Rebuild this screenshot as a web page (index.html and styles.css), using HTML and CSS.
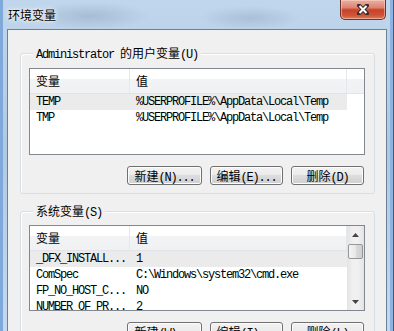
FILE: index.html
```html
<!DOCTYPE html>
<html lang="zh">
<head>
  <meta charset="UTF-8">
  <title>环境变量</title>
  <link rel="stylesheet" href="styles.css">
</head>
<body>
  <div class="window">
    <div class="titlebar">
      <span class="title">环境变量</span>
      <div class="close">
        <svg width="12" height="11" viewBox="0 0 12 11">
          <path d="M2 1.5 L10 9.5 M10 1.5 L2 9.5" stroke="#3b2a2a" stroke-width="4" stroke-linecap="square"/>
          <path d="M2.5 2 L9.5 9 M9.5 2 L2.5 9" stroke="#fff" stroke-width="2"/>
        </svg>
      </div>
    </div>

    <div class="client">
      <!-- user variables -->
      <fieldset class="group">
        <legend>Administrator <span class="zh">的用户变量</span>(U)</legend>
        <div class="list">
          <div class="grid">
            <div class="head">
              <div class="c1 zh">变量</div>
              <div class="c2 zh">值</div>
              <div class="rest"></div>
            </div>
            <div class="row sel">
              <div class="c1">TEMP</div>
              <div class="c2">%USERPROFILE%\AppData\Local\Temp</div>
            </div>
            <div class="row">
              <div class="c1">TMP</div>
              <div class="c2">%USERPROFILE%\AppData\Local\Temp</div>
            </div>
          </div>
        </div>
        <div class="buttons">
          <button class="btn wide"><span class="zh">新建</span>(N)...</button>
          <button class="btn"><span class="zh">编辑</span>(E)...</button>
          <button class="btn"><span class="zh">删除</span>(D)</button>
        </div>
      </fieldset>

      <!-- system variables -->
      <fieldset class="group">
        <legend><span class="zh">系统变量</span>(S)</legend>
        <div class="list">
          <div class="grid">
            <div class="head">
              <div class="c1 zh">变量</div>
              <div class="c2 zh">值</div>
            </div>
            <div class="row sel">
              <div class="c1">_DFX_INSTALL...</div>
              <div class="c2">1</div>
            </div>
            <div class="row">
              <div class="c1">ComSpec</div>
              <div class="c2">C:\Windows\system32\cmd.exe</div>
            </div>
            <div class="row">
              <div class="c1">FP_NO_HOST_C...</div>
              <div class="c2">NO</div>
            </div>
            <div class="row">
              <div class="c1">NUMBER_OF_PR...</div>
              <div class="c2">2</div>
            </div>
          </div>
          <div class="scroll">
            <div class="arrow">
              <svg width="7" height="4" viewBox="0 0 7 4"><path d="M0 4 L3.5 0 L7 4 Z" fill="#444"/></svg>
            </div>
            <div class="thumb"></div>
            <div class="track"></div>
            <div class="arrow">
              <svg width="7" height="4" viewBox="0 0 7 4"><path d="M0 0 L3.5 4 L7 0 Z" fill="#444"/></svg>
            </div>
          </div>
        </div>
        <div class="buttons">
          <button class="btn wide"><span class="zh">新建</span>(W)...</button>
          <button class="btn"><span class="zh">编辑</span>(I)...</button>
          <button class="btn"><span class="zh">删除</span>(L)</button>
        </div>
      </fieldset>
    </div>
  </div>
</body>
</html>
```

FILE: styles.css
```css
* {
    box-sizing: border-box;
}

body {
    margin: 0;
    background: #fff;
}

.window {
    width: 394px;
    height: 331px;
    overflow: hidden;
    display: flex;
    flex-direction: column;
    padding: 0 7px;
    background:
        radial-gradient(ellipse 60px 14px at 90px 16px, rgba(120, 145, 172, 0.35), transparent),
        radial-gradient(ellipse 50px 12px at 250px 18px, rgba(120, 145, 172, 0.3), transparent),
        linear-gradient(to bottom, #c0d6ec 0%, #b0c9e3 45%, #c4d9ef 100%);
    box-shadow: inset 3px 0 #7fa9da, inset -1px 0 #4a5a6c, inset -4px 0 #8db4e0;
    font-family: "Liberation Mono", "Noto Sans CJK SC", monospace;
    font-size: 12px;
    letter-spacing: -1.2px;
    color: #000;
}

.zh {
    font-family: "Noto Sans CJK SC", sans-serif;
    font-size: 12px;
    letter-spacing: 0;
}

/* title bar */
.titlebar {
    height: 29px;
    flex: none;
    display: flex;
    align-items: flex-start;
}

.title {
    font-family: "Noto Sans CJK SC", sans-serif;
    font-size: 12px;
    letter-spacing: 0;
    line-height: 12px;
    margin: 9px 0 0 1px;
    text-shadow: 0 0 6px #fff, 0 0 3px #fff;
}

.close {
    margin-left: auto;
    margin-right: 1px;
    width: 46px;
    height: 20px;
    display: flex;
    align-items: center;
    justify-content: center;
    border: 1px solid #6a342a;
    border-top: none;
    border-radius: 0 0 5px 5px;
    background: linear-gradient(to bottom, #eab0a2 0%, #dc8470 40%, #c8422a 52%, #cf5336 80%, #dc7a5c 100%);
    box-shadow: inset 0 0 0 1px rgba(255, 220, 210, 0.5);
}

/* client area */
.client {
    flex: none;
    background: #f0f0f0;
    border: 1px solid #6b7f96;
    padding: 17px 11px 0 12px;
}

.group {
    margin: 0;
    padding: 0 9px 8px 8px;
    min-width: 0;
    border: 1px solid #d5dfe5;
    border-radius: 3px;
    box-shadow: inset 1px 1px #fff;
}

.group + .group {
    margin-top: 11px;
}

.group legend {
    margin-left: 4px;
    padding: 0 3px;
    height: 12px;
    line-height: 12px;
    background: #f0f0f0;
}

.group legend .zh {
    line-height: 12px;
}

/* list views */
.list {
    margin-top: 9px;
    height: 87px;
    border: 1px solid #828790;
    background: #fff;
    display: flex;
    overflow: hidden;
}

.group + .group .list {
    margin-top: 8px;
    height: 86px;
}

.grid {
    flex: 1;
    display: flex;
    flex-direction: column;
}

.head {
    display: flex;
    height: 25px;
    flex: none;
    border-bottom: 1px solid #e2e3e6;
    background: linear-gradient(to bottom, #fff 42%, #f2f3f5 42%, #f0f1f3 100%);
}

.head div {
    line-height: 24px;
    border-right: 1px solid #e3e8ee;
}

.head .rest {
    flex: 1;
    border-right: none;
}

.c1 {
    width: 100px;
    flex: none;
    padding-left: 6px;
}

.c2 {
    width: 217px;
    flex: none;
    padding-left: 6px;
}

.row {
    display: flex;
    height: 16px;
    line-height: 16px;
    white-space: nowrap;
}

.row div {
    overflow: hidden;
}

.row.sel .c1,
.row.sel .c2 {
    background: #ebebeb;
}

/* scroll bar */
.scroll {
    width: 17px;
    flex: none;
    display: flex;
    flex-direction: column;
    background: linear-gradient(to right, #e4e4e4, #f0f0f0 35%, #f0f0f0 65%, #e4e4e4);
}

.arrow {
    height: 17px;
    flex: none;
    display: flex;
    align-items: center;
    justify-content: center;
}

.thumb {
    height: 15px;
    flex: none;
    margin: 1px 1px 0;
    border: 1px solid #979797;
    border-radius: 2px;
    background: linear-gradient(to right, #f4f4f4, #e8e8e8 50%, #dadada 51%, #d0d0d0);
}

.track {
    flex: 1;
}

/* buttons */
.buttons {
    display: flex;
    justify-content: flex-end;
    gap: 8px;
    margin: 11px 1px 0 0;
}

.btn {
    width: 73px;
    height: 19px;
    padding: 0;
    border: 1px solid #707070;
    border-radius: 3px;
    background: linear-gradient(to bottom, #f2f2f2 0%, #ebebeb 50%, #dddddd 50%, #cfcfcf 100%);
    box-shadow: inset 0 0 0 1px #fcfcfc;
    font: inherit;
    letter-spacing: inherit;
    color: #000;
    line-height: 17px;
    text-align: center;
}

.btn .zh {
    line-height: 17px;
}

.btn.wide {
    width: 75px;
}
```
